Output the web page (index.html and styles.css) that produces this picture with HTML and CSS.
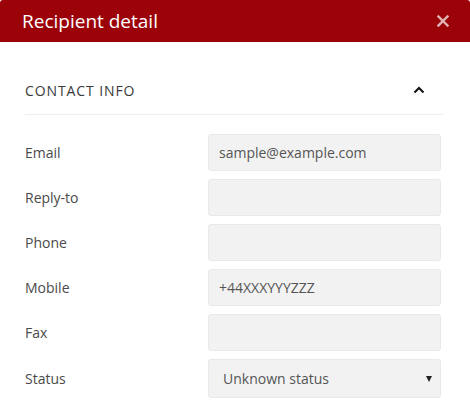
FILE: index.html
```html
<!DOCTYPE html>
<html lang="en">
<head>
    <meta charset="UTF-8">
    <meta name="viewport" content="width=device-width, initial-scale=1.0">
    <title>Recipient detail</title>
    <link rel="stylesheet" href="styles.css">
</head>
<body>
    <div class="modal">
        <header class="modal-header">
            <h1>Recipient detail</h1>
            <button class="close-btn" aria-label="Close">
                <svg width="12" height="12" viewBox="0 0 12 12">
                    <path d="M1.5 1.5 L10.5 10.5 M10.5 1.5 L1.5 10.5" stroke="currentColor" stroke-width="2.4" stroke-linecap="square"/>
                </svg>
            </button>
        </header>

        <main class="modal-body">
            <section class="panel">
                <div class="panel-head">
                    <h2>Contact info</h2>
                    <svg class="chevron" width="12" height="8" viewBox="0 0 12 8">
                        <path d="M1.5 6.5 L6 2 L10.5 6.5" fill="none" stroke="#111" stroke-width="2"/>
                    </svg>
                </div>

                <form class="fields">
                    <label class="field-label" for="email">Email</label>
                    <input class="field-input" id="email" type="text" value="sample@example.com">

                    <label class="field-label" for="reply">Reply-to</label>
                    <input class="field-input" id="reply" type="text">

                    <label class="field-label" for="phone">Phone</label>
                    <input class="field-input" id="phone" type="text">

                    <label class="field-label" for="mobile">Mobile</label>
                    <input class="field-input" id="mobile" type="text" value="+44XXXYYYZZZ">

                    <label class="field-label" for="fax">Fax</label>
                    <input class="field-input" id="fax" type="text">

                    <label class="field-label" for="status">Status</label>
                    <div class="select-wrap">
                        <select class="field-input field-select" id="status">
                            <option>Unknown status</option>
                            <option>Active</option>
                            <option>Inactive</option>
                        </select>
                    </div>
                </form>
            </section>
        </main>
    </div>
</body>
</html>
```

FILE: styles.css
```css
/* === Base === */
:root {
    --brand: #9b0309;
    --text: #333333;
    --label: #4a4a4a;
    --field-bg: #f2f2f2;
    --field-border: #e9e9e9;
}

body {
    font-family: 'Open Sans', 'Liberation Sans', sans-serif;
    margin: 0;
    padding: 0;
    background: #ffffff;
    color: var(--text);
}

/* === Header === */
.modal-header {
    height: 42px;
    background: var(--brand);
    border-radius: 3px 3px 0 0;
    display: flex;
    align-items: center;
    justify-content: space-between;
    padding: 0 22px;
}

.modal-header h1 {
    margin: 0;
    font-size: 19px;
    font-weight: 400;
    color: #ffffff;
}

.close-btn {
    background: none;
    border: none;
    padding: 0;
    margin-right: -1px;
    color: rgba(255, 255, 255, 0.7);
    display: flex;
    cursor: pointer;
}

/* === Body === */
.modal-body {
    padding: 24px 27px 0 25px;
}

.panel-head {
    height: 48px;
    display: flex;
    align-items: center;
    justify-content: space-between;
    border-bottom: 1px solid #eeeeee;
    padding-right: 18px;
}

.panel-head h2 {
    margin: 0;
    font-size: 14px;
    font-weight: 400;
    text-transform: uppercase;
    letter-spacing: 0.9px;
    color: #3a3a3a;
}

/* === Fields === */
.fields {
    display: grid;
    grid-template-columns: 183px 1fr;
    row-gap: 8px;
    align-items: center;
    padding: 19px 2px 0 0;
}

.field-label {
    font-size: 14px;
    color: var(--label);
}

.field-input {
    box-sizing: border-box;
    width: 100%;
    height: 37px;
    background: var(--field-bg);
    border: 1px solid var(--field-border);
    border-radius: 3px;
    padding: 0 10px;
    font-family: inherit;
    font-size: 14px;
    color: #555555;
    outline: none;
}

.select-wrap {
    position: relative;
}

.field-select {
    height: 39px;
    padding: 0 14px;
    appearance: none;
    -webkit-appearance: none;
}

.select-wrap::after {
    content: "";
    position: absolute;
    right: 9px;
    top: 17px;
    border-left: 3px solid transparent;
    border-right: 3px solid transparent;
    border-top: 6px solid #222;
}
```
